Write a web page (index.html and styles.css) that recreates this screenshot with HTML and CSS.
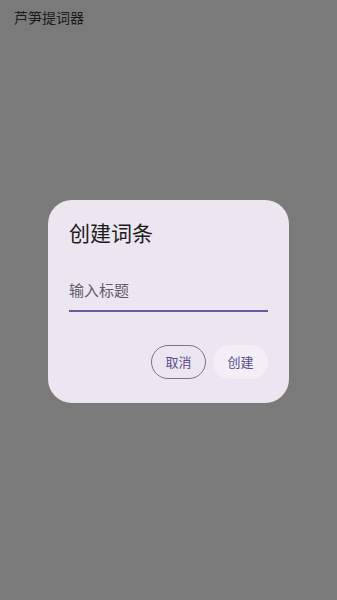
FILE: index.html
```html
<!DOCTYPE html>
<html lang="zh-CN">
<head>
<meta charset="UTF-8" />
<meta name="viewport" content="width=device-width, initial-scale=1" />
<title>芦笋提词器</title>
<link rel="stylesheet" href="styles.css">
</head>
<body>

<div class="app-title">芦笋提词器</div>

<div class="scrim">
  <div class="dialog">
    <h2 class="dialog-title">创建词条</h2>
    <div class="field">
      <span class="placeholder">输入标题</span>
    </div>
    <div class="actions">
      <button class="btn btn-outline">取消</button>
      <button class="btn btn-tonal">创建</button>
    </div>
  </div>
</div>

</body>
</html>
```

FILE: styles.css
```css
html, body {
  margin: 0;
  height: 100%;
}
body {
  background: #7a7a7a;
  font-family: Roboto, "Noto Sans CJK SC", sans-serif;
  position: relative;
}
.app-title {
  position: absolute;
  top: 8px;
  left: 14px;
  font-size: 14px;
  line-height: 20px;
  color: #1c1b1f;
}
.scrim {
  height: 100%;
  box-sizing: border-box;
  padding-top: 2px;
  display: flex;
  align-items: center;
  justify-content: center;
}
.dialog {
  width: 241px;
  box-sizing: border-box;
  background: #ece6f0;
  border-radius: 24px;
  padding: 19px 21px 24px 21px;
}
.dialog-title {
  margin: 0;
  font-size: 21px;
  font-weight: 400;
  line-height: 30px;
  color: #1d1b20;
}
.field {
  margin-top: 32px;
  padding-bottom: 9px;
  border-bottom: 2px solid #6b59a0;
}
.placeholder {
  font-size: 15px;
  line-height: 20px;
  color: #625d68;
}
.actions {
  display: flex;
  justify-content: flex-end;
  gap: 7px;
  margin-top: 33px;
}
.btn {
  width: 55px;
  height: 34px;
  border-radius: 17px;
  font-family: Roboto, "Noto Sans CJK SC", sans-serif;
  font-size: 13px;
  color: #5b4a8f;
  padding: 0;
  cursor: pointer;
}
.btn-outline {
  background: transparent;
  border: 1px solid #7a7581;
}
.btn-tonal {
  background: #f4eff7;
  border: none;
}
```
